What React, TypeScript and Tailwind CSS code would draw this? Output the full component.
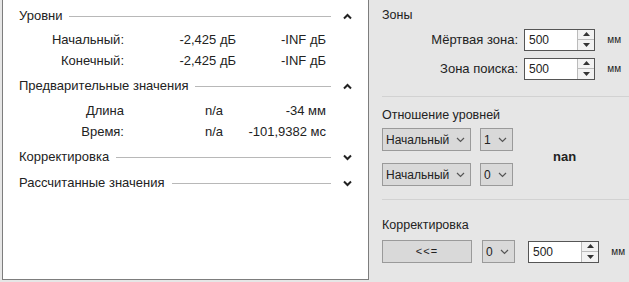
import React from 'react';

const font = "font-['Liberation_Sans','Arial',sans-serif]";

function Chevron({ up }: { up?: boolean }) {
  return (
    <svg width="9" height="7" viewBox="0 0 9 7" className="text-[#222]">
      <polyline
        points={up ? '1,5.5 4.5,2 8,5.5' : '1,1.5 4.5,5 8,1.5'}
        fill="none"
        stroke="currentColor"
        strokeWidth="2"
      />
    </svg>
  );
}

function SectionHeader({ title, up }: { title: string; up?: boolean }) {
  return (
    <div className="flex items-center h-[26px] pl-[16px] pr-[16px]">
      <span className="text-[13px] text-[#222] whitespace-nowrap">{title}</span>
      <div className="flex-1 h-px bg-[#b8b8b8] ml-[7px] mr-[12px]" />
      <Chevron up={up} />
    </div>
  );
}

function Row({ label, v1, v2, w1 }: { label: string; v1: string; v2: string; w1: string }) {
  return (
    <div className="flex h-[21px] items-center text-[13px] text-[#222]">
      <span className="w-[121px] text-right">{label}</span>
      <span className={`${w1} text-right`}>{v1}</span>
      <span className="flex-1 text-right pr-[42px]">{v2}</span>
    </div>
  );
}

function SpinBox() {
  return (
    <div className="flex w-[71px] h-[22px] border border-[#555] bg-white">
      <span className="flex-1 pl-[4px] text-[12px] leading-[20px] text-[#222]">500</span>
      <div className="w-[17px] flex flex-col border-l border-[#bbb] bg-[#f2f2f2]">
        <div className="flex-1 flex items-center justify-center border-b border-[#bbb]">
          <svg width="7" height="4" viewBox="0 0 7 4"><polygon points="0,4 3.5,0 7,4" fill="#333" /></svg>
        </div>
        <div className="flex-1 flex items-center justify-center">
          <svg width="7" height="4" viewBox="0 0 7 4"><polygon points="0,0 3.5,4 7,0" fill="#333" /></svg>
        </div>
      </div>
    </div>
  );
}

function Drop({ text, w }: { text: string; w: string }) {
  return (
    <div className={`${w} h-[23px] flex items-center justify-between pl-[3px] pr-[5px] border border-[#9a9a9a] bg-[#d9d9d9] text-[12px] text-[#222]`}>
      <span>{text}</span>
      <svg width="9" height="6" viewBox="0 0 9 6">
        <polyline points="1,1 4.5,4.5 8,1" fill="none" stroke="#555" strokeWidth="1.2" />
      </svg>
    </div>
  );
}

export default function App() {
  return (
    <div className={`w-[629px] h-[282px] flex bg-[#e6e6e6] ${font}`}>
      {/* Left panel */}
      <div className="w-[367px] h-[280px] ml-[2px] bg-white border border-[#7d7d7d] border-t-0 flex flex-col pt-[3px]">
        <SectionHeader title="Уровни" up />
        <div className="pb-[2px]">
          <Row label="Начальный:" v1="-2,425 дБ" v2="-INF дБ" w1="w-[112px]" />
          <Row label="Конечный:" v1="-2,425 дБ" v2="-INF дБ" w1="w-[112px]" />
        </div>
        <SectionHeader title="Предварительные значения" up />
        <div className="pt-[1px] pb-[2px]">
          <Row label="Длина" v1="n/a" v2="-34 мм" w1="w-[99px]" />
          <Row label="Время:" v1="n/a" v2="-101,9382 мс" w1="w-[99px]" />
        </div>
        <SectionHeader title="Корректировка" />
        <SectionHeader title="Рассчитанные значения" />
      </div>

      {/* Right panel */}
      <div className="flex-1 flex flex-col text-[12.5px] text-[#222] pl-[13px]">
        <div className="h-[97px] border-b border-[#d2d2d2] pt-[6px]">
          <div className="h-[16px]">Зоны</div>
          <div className="flex items-center justify-end h-[29px] mt-[3px] pr-[8px] gap-[6px]">
            <span className="text-[13px]">Мёртвая зона:</span>
            <SpinBox />
            <span className="w-[20px] text-[10px] text-right">мм</span>
          </div>
          <div className="flex items-center justify-end h-[29px] pr-[8px] gap-[6px]">
            <span className="text-[13px]">Зона поиска:</span>
            <SpinBox />
            <span className="w-[20px] text-[10px] text-right">мм</span>
          </div>
        </div>
        <div className="h-[103px] border-b border-[#d2d2d2] pt-[9px]">
          <div className="h-[22px]">Отношение уровней</div>
          <div className="flex items-center">
            <div className="flex flex-col gap-[12px]">
              <div className="flex gap-[9px]">
                <Drop text="Начальный" w="w-[89px]" />
                <Drop text="1" w="w-[33px]" />
              </div>
              <div className="flex gap-[9px]">
                <Drop text="Начальный" w="w-[89px]" />
                <Drop text="0" w="w-[33px]" />
              </div>
            </div>
            <span className="ml-[40px] text-[13px] font-bold">nan</span>
          </div>
        </div>
        <div className="pt-[16px]">
          <div className="h-[24px]">Корректировка</div>
          <div className="flex items-center">
            <div className="w-[90px] h-[23px] flex items-center justify-center border border-[#9a9a9a] bg-[#d9d9d9] text-[11px] tracking-[1px]">&lt;&lt;=</div>
            <div className="ml-[10px]"><Drop text="0" w="w-[33px]" /></div>
            <div className="ml-[13px]"><SpinBox /></div>
            <span className="ml-[6px] w-[20px] text-[10px] text-right">мм</span>
          </div>
        </div>
      </div>
    </div>
  );
}
